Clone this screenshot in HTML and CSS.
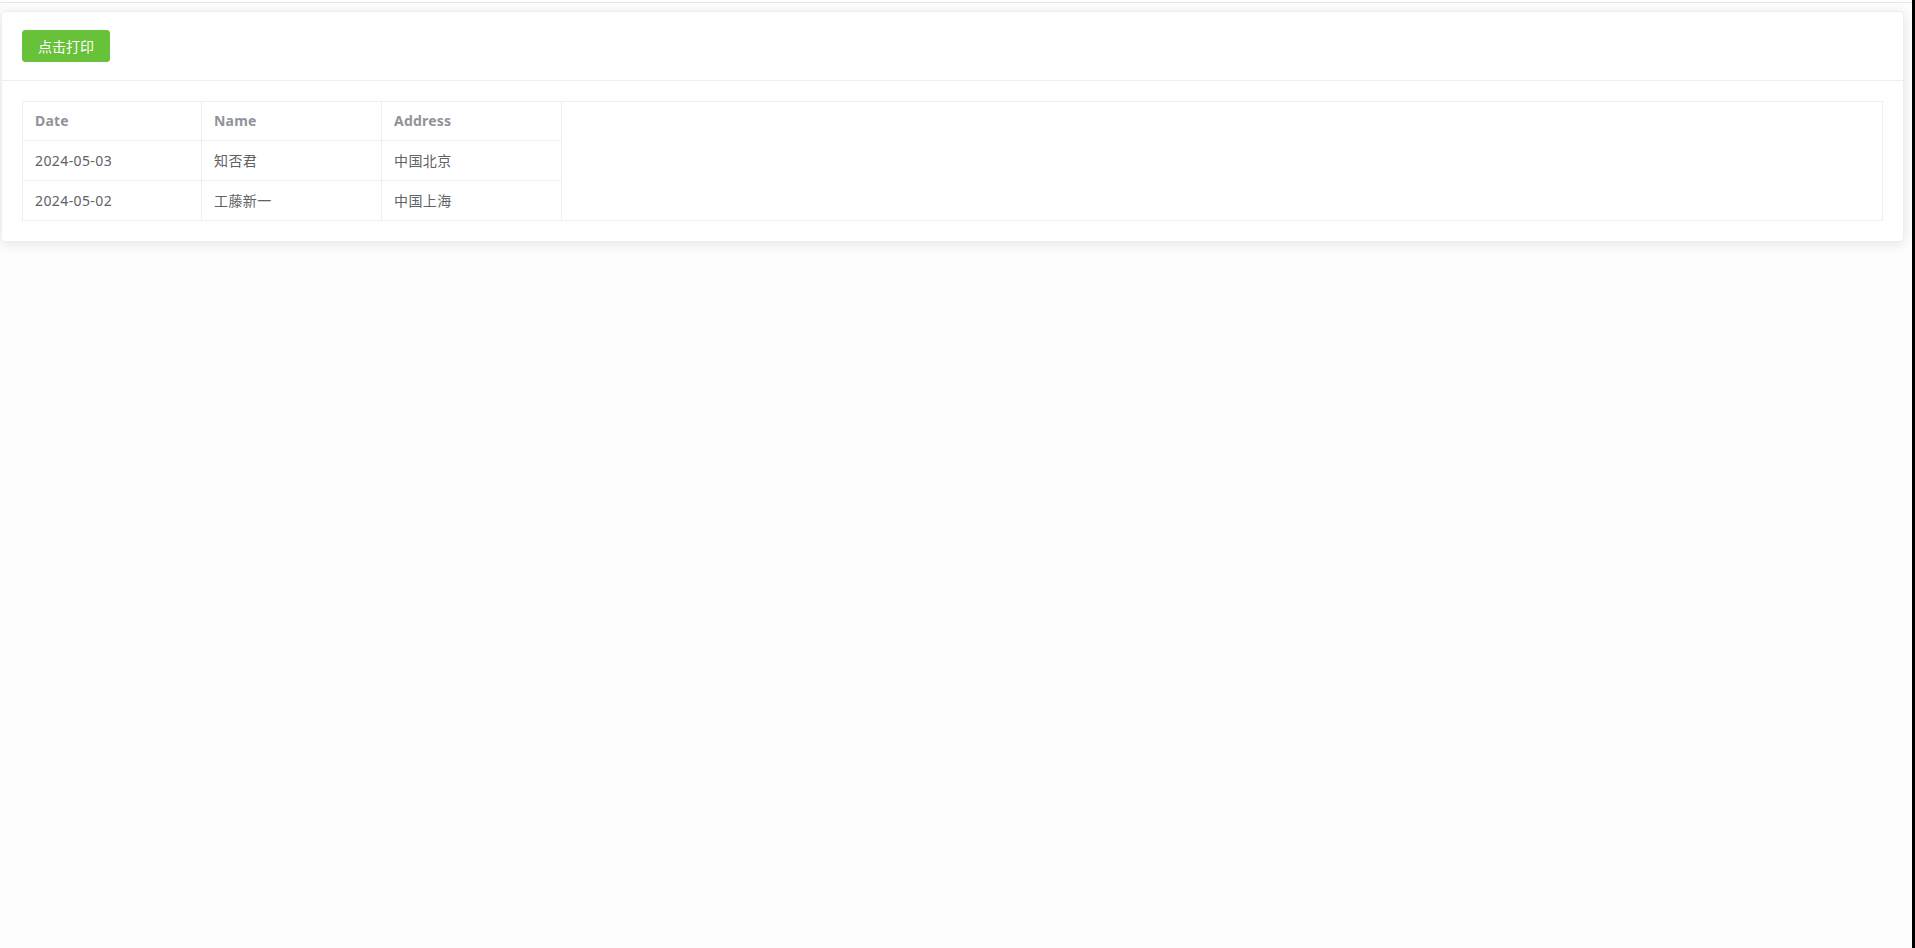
FILE: index.html
```html
<!DOCTYPE html>
<html lang="zh-CN">
  <head>
    <meta charset="UTF-8" />
    <meta name="viewport" content="width=device-width, initial-scale=1.0" />
    <title>打印</title>
    <link rel="stylesheet" href="styles.css">
  </head>
  <body>
    <div class="page">
      <div class="main">
        <div class="topbar"></div>

        <div class="card">
          <div class="card-header">
            <button class="btn-success" type="button">点击打印</button>
          </div>
          <div class="card-body">
            <div class="table-wrap">
              <table class="data-table">
                <thead>
                  <tr>
                    <th class="col-date">Date</th>
                    <th class="col-name">Name</th>
                    <th class="col-addr">Address</th>
                  </tr>
                </thead>
                <tbody>
                  <tr>
                    <td>2024-05-03</td>
                    <td>知否君</td>
                    <td>中国北京</td>
                  </tr>
                  <tr>
                    <td>2024-05-02</td>
                    <td>工藤新一</td>
                    <td>中国上海</td>
                  </tr>
                </tbody>
              </table>
            </div>
          </div>
        </div>
      </div>
      <div class="edge"></div>
    </div>
  </body>
</html>
```

FILE: styles.css
```css
* {
  margin: 0;
  padding: 0;
  box-sizing: border-box;
}

body {
  font-family: "Noto Sans", "Noto Sans CJK SC", sans-serif;
  font-size: 14px;
  color: #606266;
  background: #fdfdfd;
}

.page {
  display: flex;
  min-height: 100vh;
}

.main {
  flex: 1;
}

.edge {
  width: 3px;
  background: #000;
}

.topbar {
  height: 3px;
  border-bottom: 1px solid #e6e7ea;
}

.card {
  margin: 8px 8px 0 1px;
  background: #fff;
  border: 1px solid #ebeef5;
  border-radius: 4px;
  box-shadow: 0 2px 12px 0 rgba(0, 0, 0, 0.1);
}

.card-header {
  padding: 18px 20px;
  border-bottom: 1px solid #ebeef5;
  display: flex;
}

.btn-success {
  width: 88px;
  height: 32px;
  background: #67c23a;
  border: 1px solid #67c23a;
  border-radius: 3px;
  color: #fff;
  font-family: "Noto Sans CJK SC", sans-serif;
  font-size: 14px;
  line-height: 30px;
  text-align: center;
  cursor: pointer;
}

.card-body {
  padding: 20px;
}

.table-wrap {
  border: 1px solid #ebeef5;
  background: #fff;
}

.data-table {
  table-layout: fixed;
  width: 539px;
  border-collapse: separate;
  border-spacing: 0;
}

.data-table th,
.data-table td {
  text-align: left;
  padding: 8px 10px 8px 12px;
  border-right: 1px solid #ebeef5;
  border-bottom: 1px solid #ebeef5;
  white-space: nowrap;
  overflow: hidden;
}

.data-table th {
  color: #909399;
  font-weight: bold;
  line-height: 22px;
  letter-spacing: 0.2px;
}

.data-table td {
  line-height: 23px;
  letter-spacing: 0.4px;
}

.data-table tbody tr:last-child td {
  border-bottom: none;
}

.col-date {
  width: 179px;
}

.col-name,
.col-addr {
  width: 180px;
}
```
